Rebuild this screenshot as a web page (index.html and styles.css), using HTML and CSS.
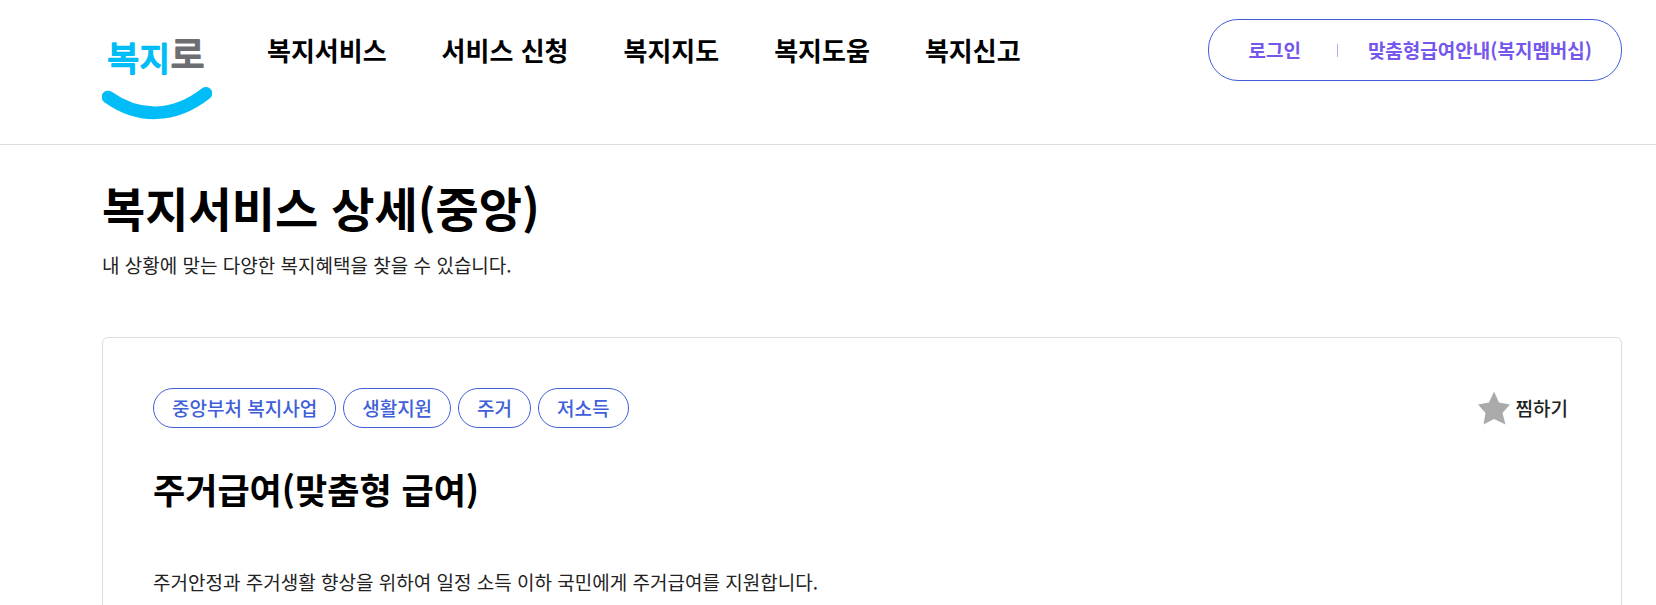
FILE: index.html
```html
<!DOCTYPE html>
<html lang="ko">
<head>
<meta charset="utf-8">
<meta name="viewport" content="width=device-width, initial-scale=1">
<title>복지로</title>
<link rel="stylesheet" href="styles.css">
</head>
<body>
<header class="header">
  <a class="logo" href="#">
    <svg class="logo-mark" viewBox="36 38 330 306" role="img" aria-label="복지로">
      <g class="logo-text">
        <text x="52" y="196" font-size="104">복</text>
        <text x="149" y="196" font-size="98">지</text>
        <text class="logo-gray" x="242" y="188" font-size="110">로</text>
      </g>
      <path class="logo-smile" d="M54 275C145 340 252 340 348 264"/>
    </svg>
  </a>
  <nav class="nav">
    <a href="#">복지서비스</a>
    <a href="#">서비스 신청</a>
    <a href="#">복지지도</a>
    <a href="#">복지도움</a>
    <a href="#">복지신고</a>
  </nav>
  <div class="account">
    <a href="#">로그인</a>
    <span class="divider"></span>
    <a href="#">맞춤형급여안내(복지멤버십)</a>
  </div>
</header>
<main class="main">
  <h1 class="title">복지서비스 상세(중앙)</h1>
  <p class="subtitle">내 상황에 맞는 다양한 복지혜택을 찾을 수 있습니다.</p>
  <section class="card">
    <div class="card-top">
      <ul class="tags">
        <li>중앙부처 복지사업</li>
        <li>생활지원</li>
        <li>주거</li>
        <li>저소득</li>
      </ul>
      <button class="favorite" type="button">
        <svg class="star" viewBox="0 0 32 34" aria-hidden="true"><path d="M16 .5L21 11.500L32 13.500L24.500 22L27.500 33.500L16 28L5.500 33.500L7.500 22L0 13.500L11 11.500Z"/></svg>
        찜하기
      </button>
    </div>
    <h2 class="card-title">주거급여(맞춤형 급여)</h2>
    <p class="card-text">주거안정과 주거생활 향상을 위하여 일정 소득 이하 국민에게 주거급여를 지원합니다.</p>
  </section>
</main>
</body>
</html>
```
FILE: styles.css
```css
* { box-sizing: border-box; }
body {
  margin: 0;
  background: #fff;
  color: #222;
  font: 19px/28px "Noto Sans CJK KR", "Noto Sans", sans-serif;
}
a { color: inherit; text-decoration: none; }
h1, h2, p, ul { margin: 0; padding: 0; }
.header {
  display: flex;
  align-items: flex-start;
  padding: 18px 34px 24px 102px;
  border-bottom: 1px solid #ddd;
}
.logo { display: block; }
.logo-mark { display: block; width: 110px; height: 102px; }
.logo-text { fill: #00bdf7; stroke: #00bdf7; stroke-width: 6; stroke-linejoin: round; }
.logo-gray { fill: #6d6e72; stroke: #6d6e72; }
.logo-smile { fill: none; stroke: #00bdf7; stroke-width: 38; stroke-linecap: round; }
.nav {
  display: flex;
  gap: 55px;
  padding: 13px 0 0 55px;
  color: #000;
  font-size: 26px;
  line-height: 38px;
  font-weight: 700;
  white-space: nowrap;
}
.account {
  display: flex;
  align-items: center;
  height: 62px;
  margin: 1px 0 0 auto;
  padding: 0 29px 0 39px;
  border: 1px solid #405fd8;
  border-radius: 30px;
  color: #7557ec;
  font-weight: 700;
  white-space: nowrap;
}
.divider { width: 1px; height: 13px; margin: 0 30px 0 36px; background: #b7a8f5; }
.main { padding: 26px 34px 0 102px; }
.title { color: #000; font-size: 47px; line-height: 72px; font-weight: 700; }
.subtitle { padding-top: 8px; }
.card {
  margin-top: 58px;
  padding: 50px 50px 60px;
  border: 1px solid #ddd;
  border-radius: 6px;
}
.card-top { display: flex; justify-content: space-between; align-items: center; }
.tags { display: flex; gap: 7px; list-style: none; }
.tags li {
  padding: 5px 18px;
  border: 1px solid #405fd8;
  border-radius: 20px;
  color: #405fd8;
  font-weight: 500;
}
.favorite {
  display: flex;
  align-items: center;
  gap: 6px;
  padding: 0 3px;
  border: 0;
  background: none;
  color: #222;
  font: inherit;
  font-weight: 500;
}
.star { width: 32px; height: 34px; fill: #aaa; }
.card-title { margin-top: 34px; color: #000; font-size: 35px; line-height: 54px; font-weight: 700; }
.card-text { margin-top: 52px; }
```
